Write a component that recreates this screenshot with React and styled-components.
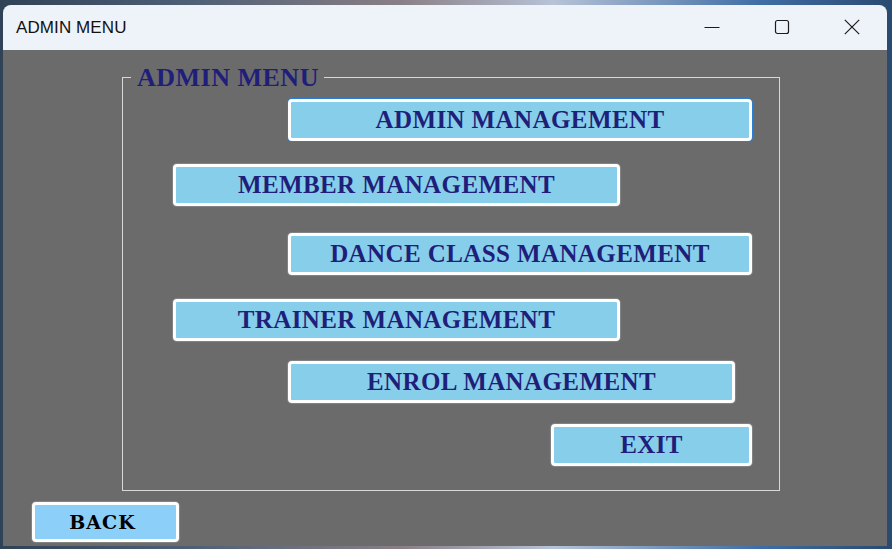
import React from "react";
import styled, { createGlobalStyle } from "styled-components";

const GlobalStyle = createGlobalStyle`
  html, body {
    margin: 0;
    padding: 0;
    overflow: hidden;
  }
  body {
    font-family: "Liberation Sans", Arial, sans-serif;
  }
`;

const buttons = [
  { label: "ADMIN MANAGEMENT", left: 165, top: 21, width: 464, focused: true },
  { label: "MEMBER MANAGEMENT", left: 50, top: 23, width: 447 },
  { label: "DANCE CLASS MANAGEMENT", left: 165, top: 27, width: 464 },
  { label: "TRAINER MANAGEMENT", left: 50, top: 24, width: 447 },
  { label: "ENROL MANAGEMENT", left: 165, top: 20, width: 447 },
  { label: "EXIT", left: 428, top: 21, width: 201 },
];

export default () => {
  return (
    <Desktop>
      <GlobalStyle />
      <Window>
        <TitleBar>
          <Title>ADMIN MENU</Title>
          <Controls>
            <ControlButton aria-label="Minimize">
              <svg width="16" height="16" viewBox="0 0 16 16">
                <line x1="0.5" y1="8.5" x2="15.5" y2="8.5" stroke="#1b1b1b" strokeWidth="1" />
              </svg>
            </ControlButton>
            <ControlButton aria-label="Maximize">
              <svg width="16" height="16" viewBox="0 0 16 16">
                <rect x="1.5" y="1.5" width="13" height="13" rx="2" fill="none" stroke="#1b1b1b" strokeWidth="1.2" />
              </svg>
            </ControlButton>
            <ControlButton aria-label="Close">
              <svg width="16" height="16" viewBox="0 0 16 16">
                <path d="M0.8 0.8 L15.2 15.2 M15.2 0.8 L0.8 15.2" stroke="#1b1b1b" strokeWidth="1.2" fill="none" />
              </svg>
            </ControlButton>
          </Controls>
        </TitleBar>
        <Content>
          <MenuFrame>
            <Legend>ADMIN MENU</Legend>
            {buttons.map((b) => (
              <MenuButton
                key={b.label}
                $left={b.left}
                $top={b.top}
                $width={b.width}
                $focused={b.focused}
              >
                {b.label}
              </MenuButton>
            ))}
          </MenuFrame>
          <BackButton>BACK</BackButton>
        </Content>
      </Window>
    </Desktop>
  );
};

const Desktop = styled.div`
  width: 892px;
  height: 549px;
  padding: 5px 5px 3px 3px;
  box-sizing: border-box;
  background: linear-gradient(
    90deg,
    #2f4256 0%,
    #4b5e74 20%,
    #8a7f86 45%,
    #b7c3d6 62%,
    #3f6ea6 85%,
    #2a4a70 100%
  );
`;

const Window = styled.div`
  display: flex;
  flex-direction: column;
  width: 884px;
  height: 541px;
  border-radius: 8px 8px 0 0;
  overflow: hidden;
  background: #6b6b6b;
`;

const TitleBar = styled.div`
  display: flex;
  align-items: center;
  justify-content: space-between;
  height: 45px;
  flex-shrink: 0;
  background: #eef3f9;
  padding-left: 13px;
`;

const Title = styled.div`
  font-family: "Liberation Sans", Arial, sans-serif;
  font-size: 17px;
  color: #111;
  letter-spacing: 0.1px;
`;

const Controls = styled.div`
  display: flex;
  height: 100%;
`;

const ControlButton = styled.div`
  width: 70px;
  height: 100%;
  display: flex;
  align-items: center;
  justify-content: center;
  padding-bottom: 2px;
  box-sizing: border-box;
`;

const Content = styled.div`
  flex: 1;
  display: flex;
  flex-direction: column;
  align-items: flex-start;
  padding: 27px 0 0 29px;
  background: #6b6b6b;
`;

const MenuFrame = styled.div`
  position: relative;
  box-sizing: border-box;
  margin: 0 0 11px 90px;
  width: 658px;
  height: 414px;
  border: 1px solid #d8d8d8;
  display: flex;
  flex-direction: column;
  align-items: flex-start;
`;

const Legend = styled.span`
  position: absolute;
  top: -11px;
  left: 8px;
  padding: 0 5px 0 6px;
  background: #6b6b6b;
  font-family: "Liberation Serif", "Times New Roman", serif;
  font-weight: bold;
  font-size: 26px;
  line-height: 22px;
  letter-spacing: 0.5px;
  color: #1f1f7a;
`;

const MenuButton = styled.div`
  box-sizing: border-box;
  width: ${(p) => p.$width}px;
  height: 42px;
  margin-left: ${(p) => p.$left}px;
  margin-top: ${(p) => p.$top}px;
  display: flex;
  align-items: center;
  justify-content: center;
  background: #87ceeb;
  border: 3px solid #ffffff;
  border-radius: 4px;
  box-shadow: ${(p) =>
    p.$focused ? "0 0 0 1px #2b7fd3" : "0 0 1px 1px rgba(150,150,150,0.6)"};
  font-family: "Liberation Serif", "Times New Roman", serif;
  font-weight: bold;
  font-size: 25px;
  letter-spacing: 0.4px;
  color: #1f1f7a;
`;

const BackButton = styled.div`
  box-sizing: border-box;
  width: 147px;
  height: 40px;
  display: flex;
  align-items: center;
  justify-content: center;
  padding-right: 6px;
  background: #8ccff8;
  border: 3px solid #ffffff;
  border-radius: 4px;
  box-shadow: 0 0 1px 1px rgba(150, 150, 150, 0.6);
  font-family: "DejaVu Serif", Georgia, serif;
  font-weight: bold;
  font-size: 19px;
  letter-spacing: 1px;
  color: #000;
`;
